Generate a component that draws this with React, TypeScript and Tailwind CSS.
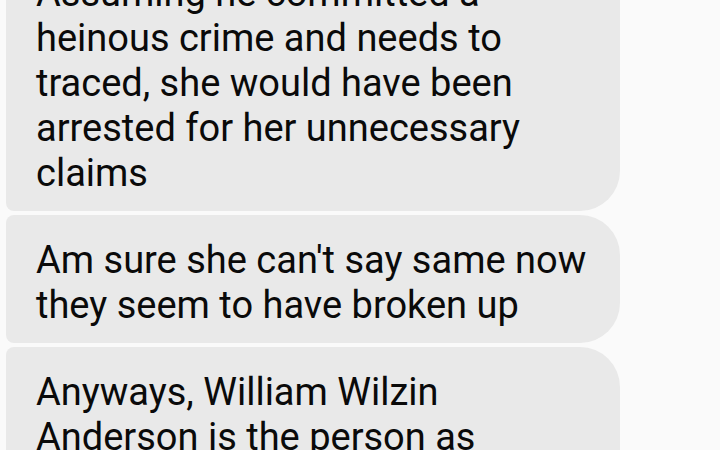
const messages: string[][] = [
  ["Assuming he committed a", "heinous crime and needs to", "traced, she would have been", "arrested for her unnecessary", "claims"],
  ["Am sure she can't say same now", "they seem to have broken up"],
  ["Anyways, William Wilzin", "Anderson is the person as", "far as I know"],
];

export default function App() {
  return (
    <div className="h-[450px] w-[720px] overflow-hidden bg-[#fafafa] font-['Roboto',sans-serif]">
      <div className="-mt-[52px] flex flex-col gap-[4px] pl-[6px]">
        {messages.map((lines, i) => (
          <div
            key={i}
            className="w-[614px] rounded-l-[8px] rounded-r-[40px] bg-[#e9e9e9] pl-[30px] pr-4 pt-[23px] pb-[15px] text-[38px] leading-[45px] text-[#0a0a0a]"
          >
            {lines.map((l, j) => (
              <div key={j} className="whitespace-nowrap">{l}</div>
            ))}
          </div>
        ))}
      </div>
    </div>
  );
}
